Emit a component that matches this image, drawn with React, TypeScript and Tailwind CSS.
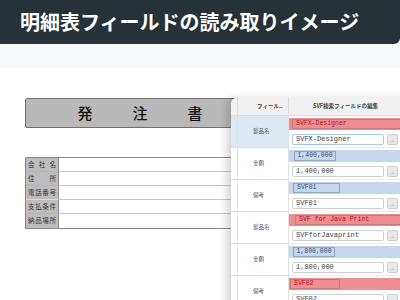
import React from "react";

type Row = {
  label: string
  tone: "red" | "blue"
  bar: string
  boxClass: string
  center?: boolean
  value: string
  selected?: boolean
}

const rows: Row[] = [
  { label: "製品名", tone: "red", bar: "SVFX-Designer", boxClass: "ml-[3px] flex-1 border-r-0", value: "SVFX-Designer", selected: true },
  { label: "金額", tone: "blue", bar: "1,400,000", boxClass: "ml-[5px] w-[42px]", center: true, value: "1,400,000" },
  { label: "備考", tone: "blue", bar: "SVF01", boxClass: "ml-[4px] w-[47px]", value: "SVF01" },
  { label: "製品名", tone: "red", bar: "SVF for Java Print", boxClass: "ml-[6px] flex-1 border-r-0", value: "SVFforJavaprint" },
  { label: "金額", tone: "blue", bar: "1,800,000", boxClass: "ml-[4px] w-[42px]", center: true, value: "1,800,000" },
  { label: "備考", tone: "red", bar: "SVF02", boxClass: "ml-[1px] w-[50px]", value: "SVF02" },
];

const formRows = [
  ["会", "社", "名"],
  ["住", "所"],
  ["電", "話", "番", "号"],
  ["支", "払", "条", "件"],
  ["納", "品", "場", "所"],
];

const mono = "font-['Liberation_Mono','Noto_Sans_CJK_JP',monospace]";

const FieldRow = ({ row }: { row: Row }) => {
  const red = row.tone === "red";
  return (
    <div className="flex h-[32px]">
      <div className={`w-[7px] border-r border-b border-[#e1e1e1] ${row.selected ? "bg-[#dce9f3]" : "bg-white"}`} />
      <div
        className={`w-[51px] flex items-center pl-[15px] text-[5.5px] text-[#555] border-r border-b border-[#e1e1e1] ${row.selected ? "bg-[#dce9f3]" : "bg-white"}`}
      >
        {row.label}
      </div>
      <div className="flex-1 flex flex-col pt-[2px] border-b border-[#ececec]">
        <div className={`h-[12px] flex py-[1px] ${red ? "bg-[#f08d91]" : "bg-[#c5d7ee]"}`}>
          <div
            className={`${row.boxClass} flex items-center border ${row.center ? "justify-center" : "pl-[3px]"} ${mono} text-[6.5px] ${
              red ? "border-[#c9777c] text-[#a3222b]" : "border-[#8ea3c0] text-[#3d4d6b]"
            }`}
          >
            {row.bar}
          </div>
        </div>
        <div className="flex items-center mt-[4px] pl-[3px] gap-[3px]">
          <div
            className={`w-[92px] h-[11px] bg-white border rounded-[2px] flex items-center pl-[3px] ${mono} text-[7px] text-[#444] ${
              row.selected ? "border-[#a9c8e8]" : "border-[#cfcfcf]"
            }`}
          >
            {row.value}
          </div>
          <div className="w-[11px] h-[11px] bg-[#e9e9e9] border border-[#cccccc] rounded-[2px] flex items-center justify-center text-[6px] text-[#888] leading-none">
            ...
          </div>
        </div>
      </div>
    </div>
  );
};

export default function App() {
  return (
    <div className="w-[400px] h-[300px] overflow-hidden relative bg-white font-['Noto_Sans_CJK_JP',sans-serif]">
      <header className="h-[44px] bg-[#263238] rounded-br-md flex items-center pl-[20px]">
        <h1 className="text-white text-[20px] font-bold leading-none">明細表フィールドの読み取りイメージ</h1>
      </header>
      <div className="h-[24px] bg-[#f8f9fb]" />

      <section className="pl-[25px] pt-[30px]">
        <div className="w-[230px] h-[30px] bg-[#b9b9b9] border border-[#707070] rounded-[2px] flex items-center justify-center gap-[40px] text-[15px] font-medium text-[#111]">
          <span>発</span>
          <span>注</span>
          <span>書</span>
        </div>

        <div className="mt-[29px] w-[230px] border border-[#8a8a8a] rounded-[1px]">
          {formRows.map((chars, i) => (
            <div key={i} className="flex h-[14px]">
              <div
                className={`w-[33px] bg-[#bdbdbd] border-r border-[#8a8a8a] flex items-center justify-between px-[2px] text-[6.5px] text-[#333] ${
                  i === 2 ? "border-b border-b-[#dddddd]" : i < 4 ? "border-b border-b-[#b5b5b5]" : ""
                }`}
              >
                {chars.map((c, j) => (
                  <span key={j}>{c}</span>
                ))}
              </div>
              <div className={`flex-1 bg-white ${i < 4 ? "border-b border-[#c6c6c6]" : ""}`} />
            </div>
          ))}
        </div>
      </section>

      <div className="absolute left-[231px] top-[97px] w-[175px] h-[215px] bg-white rounded-tl-lg shadow-[-4px_2px_8px_rgba(0,0,0,0.18)] overflow-hidden">
        <div className="flex h-[19px] bg-[#f1f1f1] border-b border-[#dddddd] text-[5.5px] font-bold text-[#444]">
          <div className="w-[7px] border-r border-[#dddddd]" />
          <div className="w-[51px] flex items-center pl-[19px] border-r border-[#dddddd]">フィール..</div>
          <div className="flex-1 flex items-center justify-center pr-[4px]">SVF検索フィールドの編集</div>
        </div>
        {rows.map((row, i) => (
          <FieldRow key={i} row={row} />
        ))}
      </div>
    </div>
  );
}
